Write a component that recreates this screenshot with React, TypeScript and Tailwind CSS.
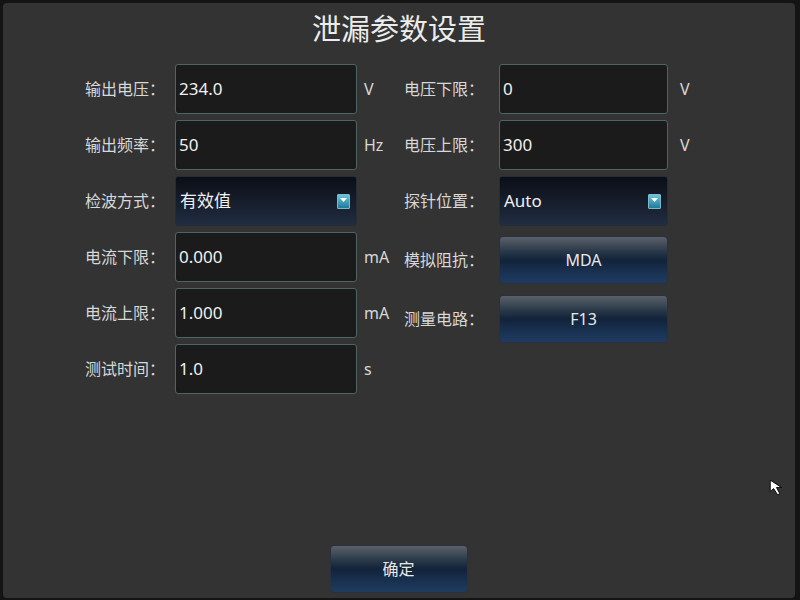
const font = { fontFamily: '"Noto Sans", "Noto Sans CJK SC", sans-serif' };

function Field({ value, width }: { value: string; width: string }) {
  return (
    <div
      className={`${width} h-[50px] flex items-center pl-[3px] bg-[#1b1b1b] border border-[#4d6565] rounded-[3px] text-[17px] text-[#f0f0f0]`}
    >
      {value}
    </div>
  );
}

function DropIcon() {
  return (
    <div className="w-[13px] h-[15px] rounded-[1px] border border-[#7fb8c8] bg-gradient-to-b from-[#6cc4dc] to-[#1a7c9c] flex items-start justify-center pt-[3px]">
      <svg width="7" height="4" viewBox="0 0 7 4">
        <path d="M0 0 L7 0 L3.5 4 Z" fill="#ffffff" />
      </svg>
    </div>
  );
}

function Select({ value, width }: { value: string; width: string }) {
  return (
    <div
      className={`${width} h-[50px] flex items-center justify-between pl-[4px] pr-[6px] rounded-[3px] border border-[#262c38] bg-gradient-to-b from-[#0b0e16] to-[#222d42] text-[17px] text-[#f0f0f0]`}
    >
      <span>{value}</span>
      <DropIcon />
    </div>
  );
}

function Btn({ label, width }: { label: string; width: string }) {
  return (
    <div
      className={`${width} h-[48px] flex items-center justify-center rounded-[4px] border border-[#2a3042] bg-[linear-gradient(to_bottom,#5b6169_0%,#2b3a4a_30%,#12233a_50%,#1a3354_80%,#1f3b5f_100%)] text-[16px] text-[#e8e8e8]`}
    >
      {label}
    </div>
  );
}

function LeftRow({ label, value, unit, select }: { label: string; value: string; unit: string; select?: boolean }) {
  return (
    <div className="flex items-center h-[50px]">
      <div className="w-[90px] text-[16px] text-[#d8d8d8] whitespace-nowrap">{label}</div>
      {select ? <Select value={value} width="w-[182px]" /> : <Field value={value} width="w-[182px]" />}
      <div className="w-[47px] pl-[7px] text-[16px] text-[#d8d8d8]">{unit}</div>
    </div>
  );
}

function RightRow({ label, children, unit }: { label: string; children: React.ReactNode; unit?: string }) {
  return (
    <div className="flex items-center">
      <div className="w-[95px] text-[16px] text-[#d8d8d8] whitespace-nowrap">{label}</div>
      {children}
      <div className="pl-[12px] text-[16px] text-[#d8d8d8]">{unit}</div>
    </div>
  );
}

export default function App() {
  return (
    <div className="w-[800px] h-[600px] bg-[#141414] pt-[3px] pl-[3px] pr-[5px] pb-[2px]" style={font}>
      <div className="relative w-full h-full bg-[#333333] rounded-[4px] flex flex-col">
        <div className="h-[54px] flex items-center justify-center text-[29px] text-[#ececec] pb-[2px]">
          泄漏参数设置
        </div>

        <div className="flex pl-[82px] mt-[7px]">
          <div className="flex flex-col gap-[6px]">
            <LeftRow label="输出电压：" value="234.0" unit="V" />
            <LeftRow label="输出频率：" value="50" unit="Hz" />
            <LeftRow label="检波方式：" value="有效值" unit="" select />
            <LeftRow label="电流下限：" value="0.000" unit="mA" />
            <LeftRow label="电流上限：" value="1.000" unit="mA" />
            <LeftRow label="测试时间：" value="1.0" unit="s" />
          </div>

          <div className="flex flex-col">
            <RightRow label="电压下限：" unit="V">
              <Field value="0" width="w-[169px]" />
            </RightRow>
            <div className="mt-[6px]">
              <RightRow label="电压上限：" unit="V">
                <Field value="300" width="w-[169px]" />
              </RightRow>
            </div>
            <div className="mt-[6px]">
              <RightRow label="探针位置：">
                <Select value="Auto" width="w-[169px]" />
              </RightRow>
            </div>
            <div className="mt-[10px]">
              <RightRow label="模拟阻抗：">
                <Btn label="MDA" width="w-[169px]" />
              </RightRow>
            </div>
            <div className="mt-[11px]">
              <RightRow label="测量电路：">
                <Btn label="F13" width="w-[169px]" />
              </RightRow>
            </div>
          </div>
        </div>

        <div className="mt-auto mb-[5px] flex justify-center pr-[1px]">
          <Btn label="确定" width="w-[138px]" />
        </div>

        <svg
          className="absolute left-[766px] top-[476px]"
          width="16"
          height="18"
          viewBox="0 0 14 16"
        >
          <path d="M1 1 L1 11 L4 8.5 L7.5 14 L9.5 13 L6.5 7.5 L11 7.5 Z" fill="#ffffff" stroke="#000000" strokeWidth="0.8" />
        </svg>
      </div>
    </div>
  );
}
